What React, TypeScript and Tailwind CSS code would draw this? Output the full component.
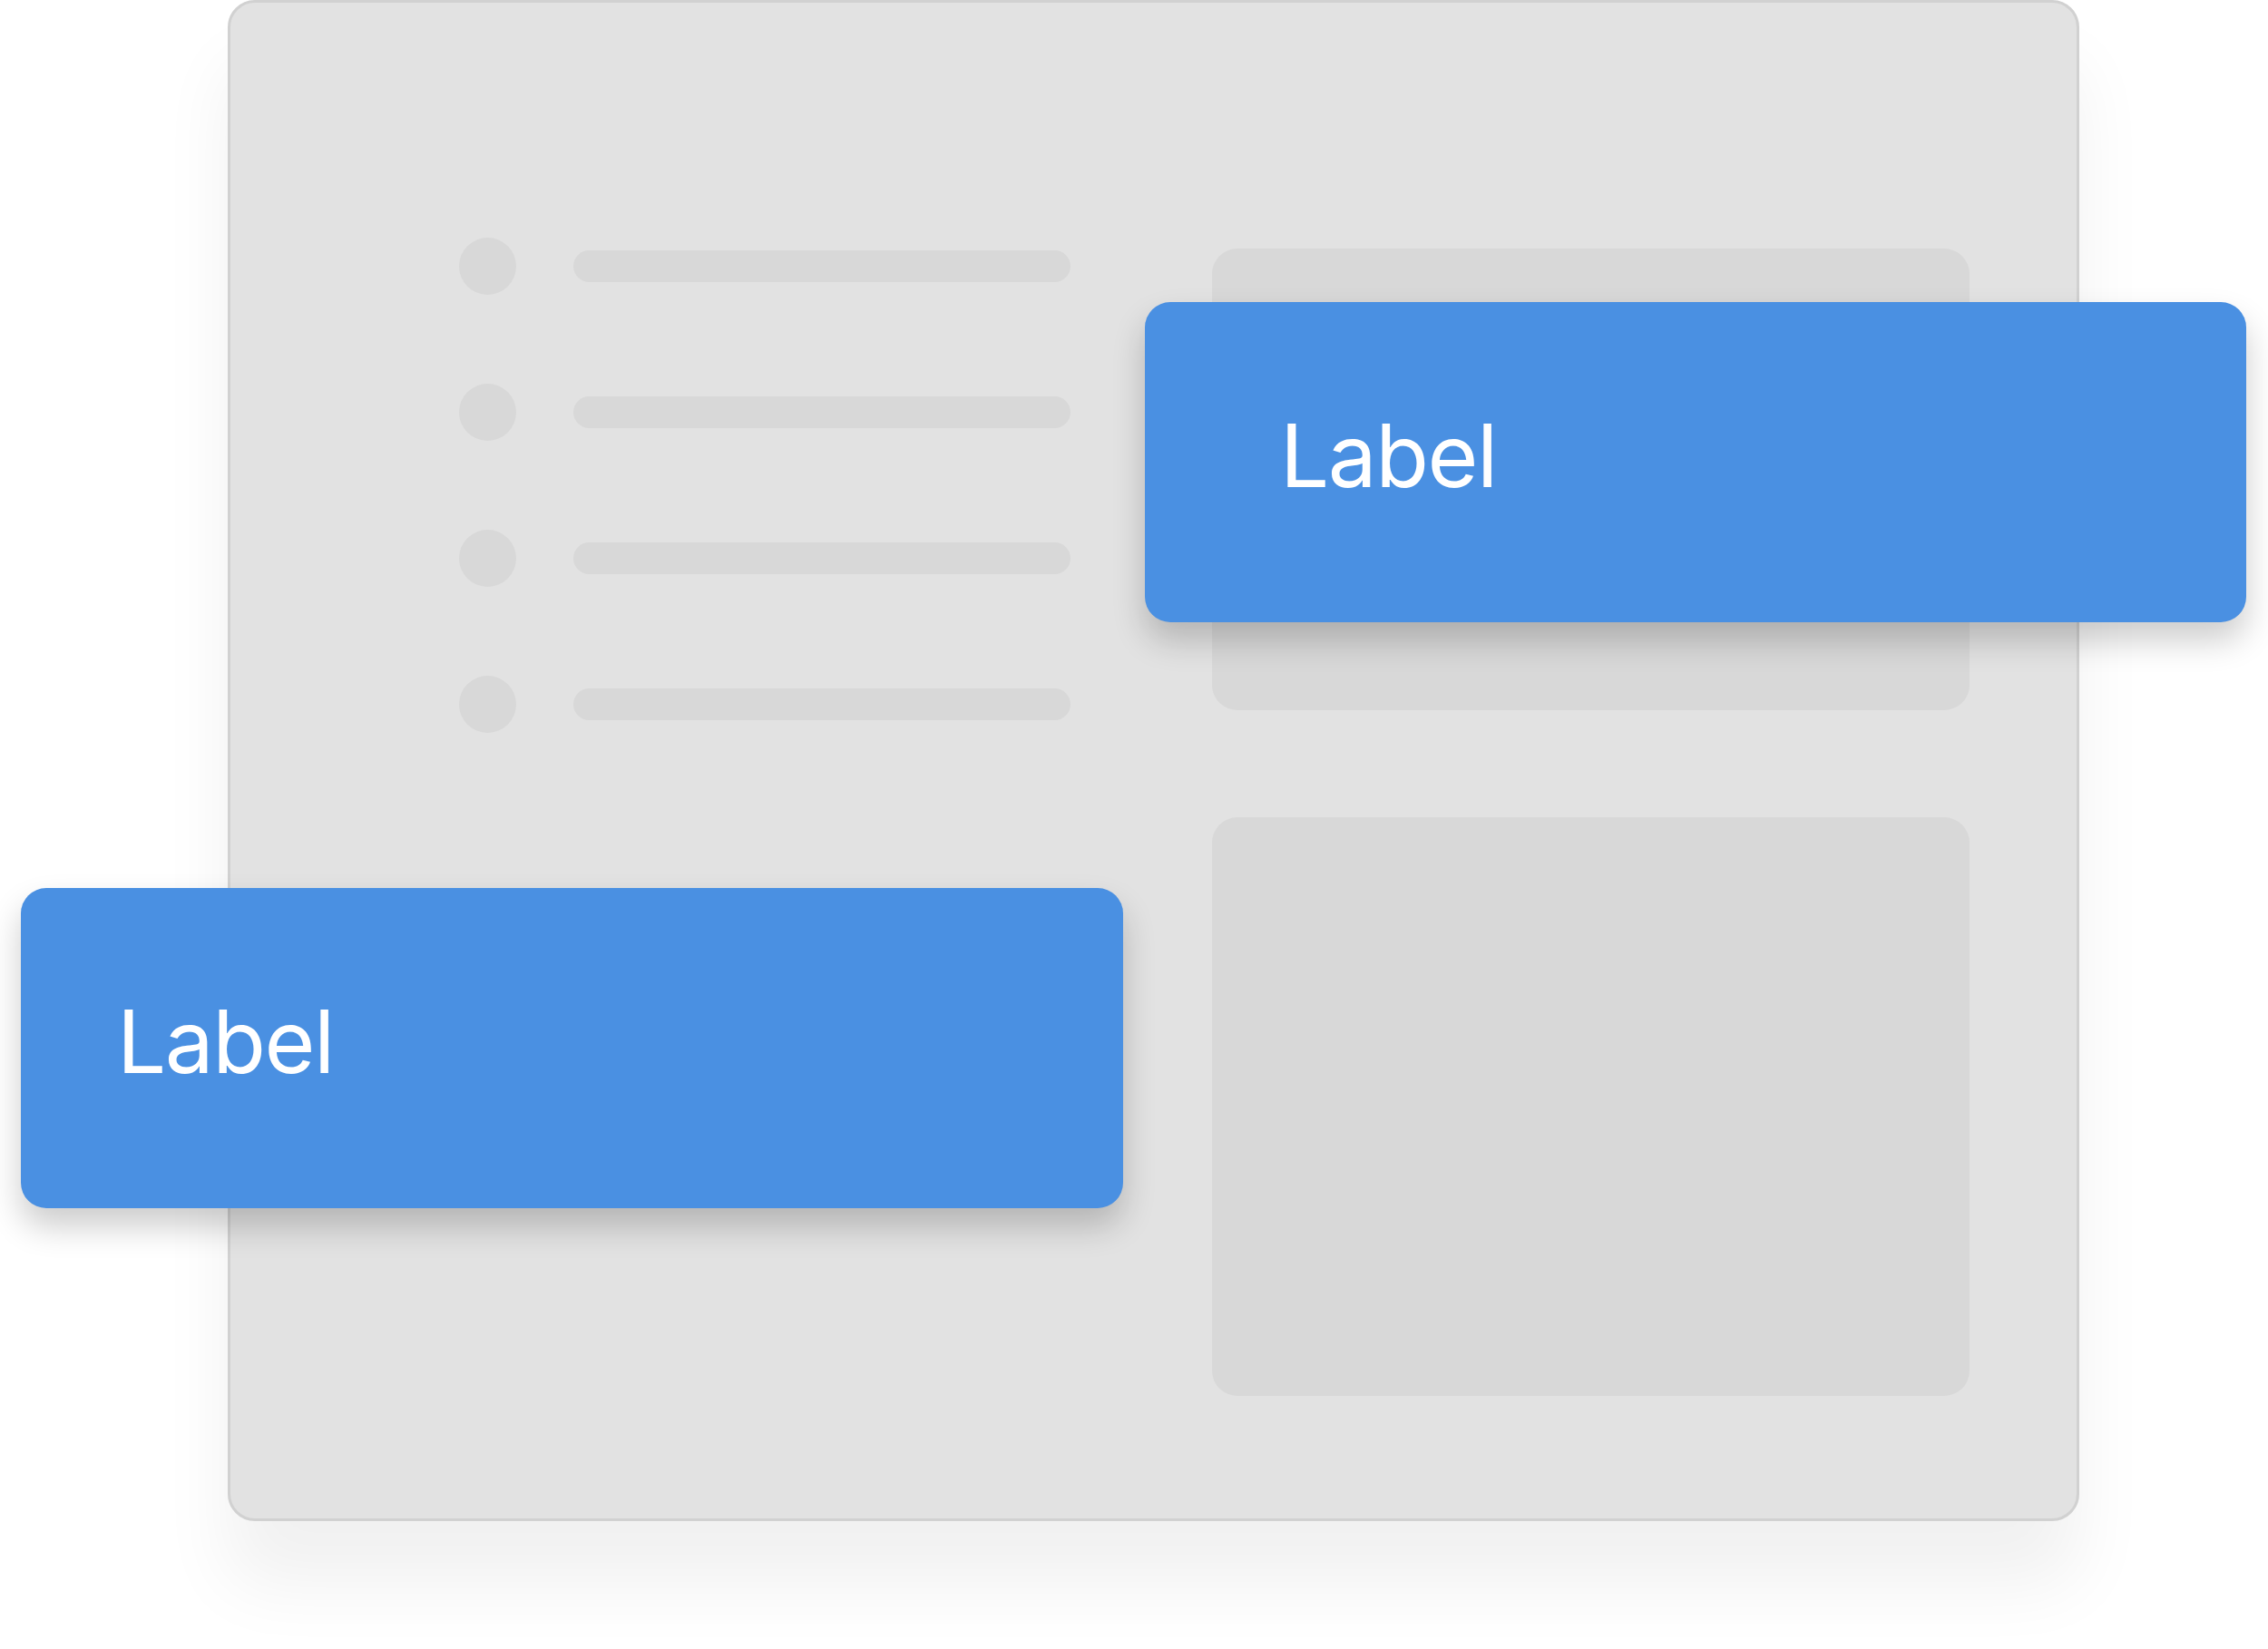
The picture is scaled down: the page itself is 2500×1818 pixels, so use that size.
const rows = [0, 1, 2, 3];

function LabelCard({ className }: { className: string }) {
  return (
    <div
      className={`absolute h-[353px] rounded-[28px] bg-[#4a90e2] pt-[121px] shadow-[0_20px_36px_rgba(0,0,0,0.2)] ${className}`}
    >
      <span className="block text-[96px] leading-none font-normal tracking-[-1.5px] text-white">
        Label
      </span>
    </div>
  );
}

export default function App() {
  return (
    <div className="relative h-[1818px] w-[2500px] overflow-hidden bg-white font-['Inter','Liberation_Sans',sans-serif]">
      <div className="ml-[251px] flex h-[1677px] w-[2041px] gap-[156px] rounded-[30px] border-[3px] border-[#d1d1d1] bg-[#e2e2e2] pl-[252px] pr-[118px] pt-[259px] shadow-[0_70px_80px_rgba(0,0,0,0.06)]">
        {/* list skeleton */}
        <div className="flex w-[674px] shrink-0 flex-col gap-[98px]">
          {rows.map((r) => (
            <div key={r} className="flex h-[63px] items-center gap-[63px]">
              <div className="h-[63px] w-[63px] shrink-0 rounded-full bg-[#d8d8d8]" />
              <div className="h-[35px] flex-1 rounded-full bg-[#d8d8d8]" />
            </div>
          ))}
        </div>

        {/* blocks */}
        <div className="mt-[12px] flex w-[835px] shrink-0 flex-col gap-[118px]">
          <div className="h-[509px] rounded-[28px] bg-[#d8d8d8]" />
          <div className="h-[638px] rounded-[28px] bg-[#d8d8d8]" />
        </div>
      </div>

      <LabelCard className="left-[1262px] top-[333px] w-[1214px] pl-[149px]" />
      <LabelCard className="left-[23px] top-[979px] w-[1215px] pl-[106px]" />
    </div>
  );
}
